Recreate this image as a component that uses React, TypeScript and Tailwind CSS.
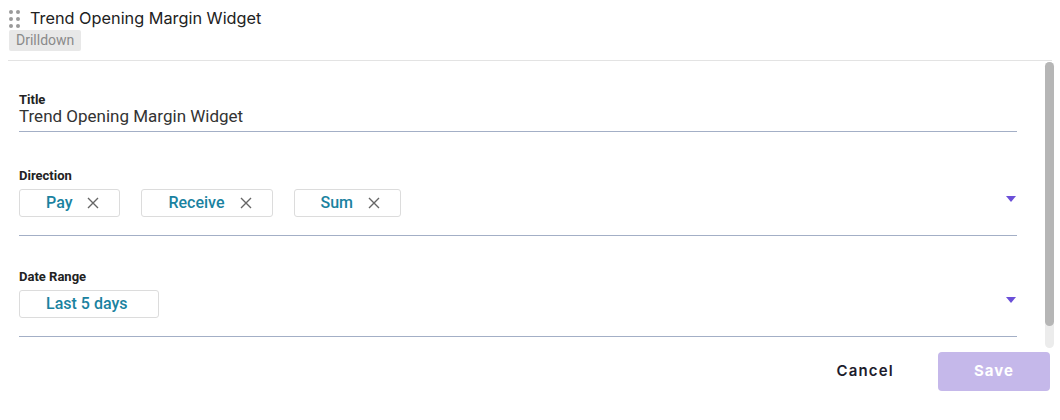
import React from 'react';

const X = () => (
  <svg width="12" height="12" viewBox="0 0 12 12" className="text-[#666]">
    <path d="M1 1 L11 11 M11 1 L1 11" stroke="currentColor" strokeWidth="1.4" />
  </svg>
);

const Caret = () => (
  <svg width="10" height="6" viewBox="0 0 10 6">
    <path d="M0 0 H10 L5 6 Z" fill="#6b4fd8" />
  </svg>
);

function Chip({ label, removable = true, wide = false }: { label: string; removable?: boolean; wide?: boolean }) {
  return (
    <div
      className={`h-[28px] flex items-center border border-[#dcdcdc] rounded-[3px] pl-[26px] ${
        removable ? 'pr-[20px] gap-[15px]' : wide ? 'pr-[31px]' : ''
      }`}
    >
      <span className="text-[16px] font-medium text-[#1a82a0]">{label}</span>
      {removable && <X />}
    </div>
  );
}

export default function App() {
  return (
    <div className="w-[1060px] h-[420px] bg-white font-['Roboto',sans-serif] text-[#222]">
      {/* header */}
      <div className="pl-[9px] pt-[9px] h-[60px]">
        <div className="flex items-center gap-[11px] h-[19px]">
          <div className="grid grid-cols-2 gap-[3px] w-[10px]">
            {[0, 1, 2, 3, 4, 5].map((i) => (
              <span key={i} className="w-[4px] h-[4px] rounded-full bg-[#9a9a9a]" />
            ))}
          </div>
          <span className="font-['Inter',sans-serif] text-[16.3px] text-[#222]">Trend Opening Margin Widget</span>
        </div>
        <div className="mt-[2px] inline-block bg-[#e8e8e8] text-[#8a8a8a] text-[14px] leading-[21px] px-[7px] rounded-[2px]">
          Drilldown
        </div>
      </div>

      {/* body */}
      <div className="mx-[8px] border-t border-[#e3e3e3] h-[291px] flex">
        <div className="flex-1 pl-[11px] pr-[28px] pt-[31px]">
          <div className="border-b border-[#a3afc6] pb-[7px]">
            <div className="text-[13px] font-bold leading-[16px]">Title</div>
            <div className="text-[17px] leading-[16px] text-[#333]">Trend Opening Margin Widget</div>
          </div>

          <div className="mt-[36px] border-b border-[#a3afc6] pb-[18px] flex items-end">
            <div className="flex-1">
              <div className="text-[13px] font-bold leading-[16px] mb-[5px]">Direction</div>
              <div className="flex gap-[21px]">
                <Chip label="Pay" />
                <Chip label="Receive" />
                <Chip label="Sum" />
              </div>
            </div>
            <div className="mb-[15px] mr-[1px]">
              <Caret />
            </div>
          </div>

          <div className="mt-[33px] border-b border-[#a3afc6] pb-[18px] flex items-end">
            <div className="flex-1">
              <div className="text-[13px] font-bold leading-[16px] mb-[5px]">Date Range</div>
              <div className="flex">
                <Chip label="Last 5 days" removable={false} wide />
              </div>
            </div>
            <div className="mb-[15px] mr-[1px]">
              <Caret />
            </div>
          </div>
        </div>

        {/* scrollbar */}
        <div className="w-[9px] mt-[1px] mb-[3px] mr-[-2px] bg-[#ececec] rounded-full flex flex-col">
          <div className="h-[264px] bg-[#b6b6b6] rounded-full" />
        </div>
      </div>

      {/* footer */}
      <div className="flex items-center justify-end gap-[44px] pr-[10px] pt-[1px]">
        <button className="font-['Inter',sans-serif] font-semibold text-[15px] tracking-[1.2px] text-[#1c1c2c]">
          Cancel
        </button>
        <button className="w-[112px] h-[39px] rounded-[4px] bg-[#c5b8ea] text-white font-['Inter',sans-serif] font-bold text-[15px] tracking-[1px]">
          Save
        </button>
      </div>
    </div>
  );
}
